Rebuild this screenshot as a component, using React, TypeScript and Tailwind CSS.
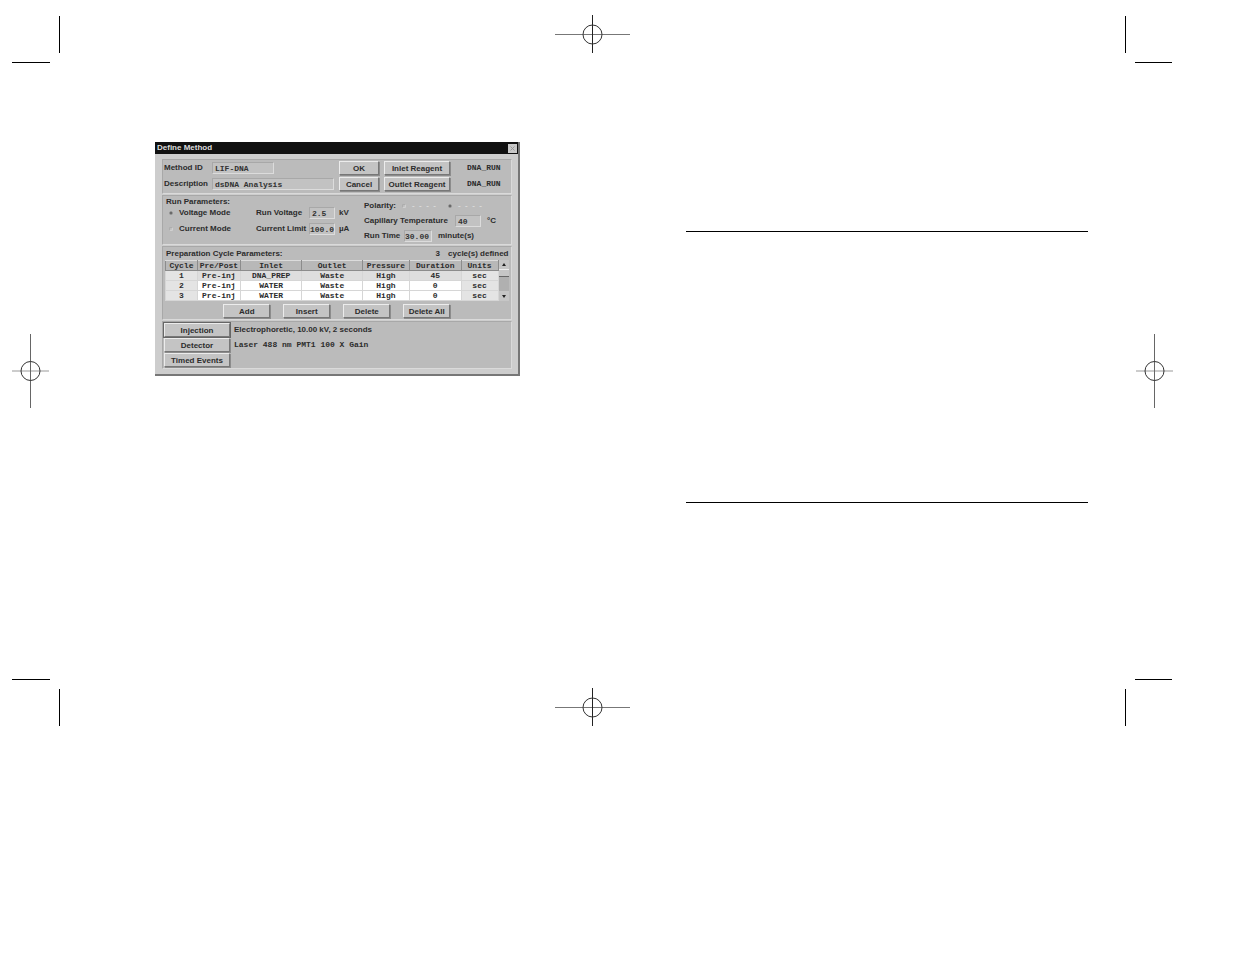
import type { ReactNode } from "react";

function CropMark({ corner }: { corner: "tl" | "tr" | "bl" | "br" }) {
  const lines = {
    tl: ["M47.5 1V38", "M0 47.5H38"],
    tr: ["M0.5 1V38", "M10 47.5H47"],
    bl: ["M47.5 10V47", "M0 0.5H38"],
    br: ["M0.5 10V47", "M10 0.5H47"],
  }[corner];
  return (
    <svg width="48" height="48" aria-hidden="true" className="block shrink-0" fill="none" stroke="#000">
      {lines.map((d) => (
        <path key={d} d={d} />
      ))}
    </svg>
  );
}

function WideTarget() {
  return (
    <svg width="76" height="38" aria-hidden="true" className="block shrink-0" fill="none">
      <path d="M0 19.5H75" stroke="#777" />
      <path d="M37.5 0V38" stroke="#222" />
      <circle cx="37.5" cy="19.5" r="9.5" stroke="#333" />
    </svg>
  );
}

function TallTarget() {
  return (
    <svg width="37" height="75" aria-hidden="true" className="block shrink-0 self-center" fill="none">
      <path d="M0 37H37" stroke="#ccc" strokeWidth="2" />
      <path d="M18.5 0V74" stroke="#666" />
      <circle cx="18.5" cy="37" r="9.5" stroke="#333" />
    </svg>
  );
}

function Field({ id, value, className }: { id: string; value: string; className: string }) {
  return (
    <input
      id={id}
      defaultValue={value}
      className={`h-3 min-w-0 border border-t-[#a8a8a8] border-l-[#a8a8a8] border-r-[#dcdcdc] border-b-[#dcdcdc] bg-[#c2c2c2] font-['Liberation_Mono',monospace] text-[8px] leading-none font-bold text-[#333] ${className}`}
    />
  );
}

function Button({ children, className = "" }: { children: ReactNode; className?: string }) {
  return (
    <button
      type="button"
      className={`h-[14px] border border-t-[#ececec] border-l-[#ececec] border-r-[#777] border-b-[#777] bg-[#c4c4c4] text-center leading-[11px] whitespace-nowrap shadow-[1px_1px_0_#8c8c8c] ${className}`}
    >
      {children}
    </button>
  );
}

const panel = "border border-t-[#a8a8a8] border-l-[#a8a8a8] border-r-[#dadada] border-b-[#dadada] bg-[#bbbbbb]";
const mono = "font-['Liberation_Mono',monospace]";
const radio = "m-0 size-1 shrink-0 appearance-none rounded-full border border-t-[#aaa] border-l-[#aaa] border-r-[#d4d4d4] border-b-[#d4d4d4] bg-[#c4c4c4] checked:border-[#999] checked:bg-[#555]";

const columns = ["Cycle", "Pre/Post", "Inlet", "Outlet", "Pressure", "Duration", "Units"];
const cycles = [
  ["1", "Pre-inj", "DNA_PREP", "Waste", "High", "45", "sec"],
  ["2", "Pre-inj", "WATER", "Waste", "High", "0", "sec"],
  ["3", "Pre-inj", "WATER", "Waste", "High", "0", "sec"],
];

function MethodHeader() {
  return (
    <section className={`flex h-[35px] gap-[5px] pt-px pl-px ${panel}`}>
      <div className="grid grid-cols-[48px_122px] content-start items-center gap-y-1 pt-px">
        <label htmlFor="method-id">Method ID</label>
        <Field id="method-id" value="LIF-DNA" className="w-[62px] px-0.5" />
        <label htmlFor="description">Description</label>
        <Field id="description" value="dsDNA Analysis" className="w-full px-0.5" />
      </div>
      <div className="grid grid-cols-[40px_66px_auto] content-start items-center gap-x-[5px] gap-y-0.5">
        <Button>OK</Button>
        <Button>Inlet Reagent</Button>
        <span className={`pl-3 ${mono}`}>DNA_RUN</span>
        <Button>Cancel</Button>
        <Button>Outlet Reagent</Button>
        <span className={`pl-3 ${mono}`}>DNA_RUN</span>
      </div>
    </section>
  );
}

function RunParameters() {
  return (
    <section aria-label="Run Parameters" className={`flex h-[50px] pt-px pl-[3px] ${panel}`}>
      <div className="w-[198px]">
        <h2 className="leading-[10px]">Run Parameters:</h2>
        <div className="grid grid-cols-[90px_53px_26px_auto] items-center gap-y-1">
          <label className="flex items-center gap-1.5 pl-[3px]">
            <input type="radio" name="mode" defaultChecked className={radio} />
            Voltage Mode
          </label>
          <label htmlFor="run-voltage">Run Voltage</label>
          <Field id="run-voltage" value="2.5" className="w-full px-0.5" />
          <span className="pl-1">kV</span>
          <label className="flex items-center gap-1.5 pl-[3px]">
            <input type="radio" name="mode" className={radio} />
            Current Mode
          </label>
          <label htmlFor="current-limit">Current Limit</label>
          <Field id="current-limit" value="100.0" className="w-full px-0" />
          <span className="pl-1">µA</span>
        </div>
      </div>
      <div className="flex flex-col gap-[3px] pt-[3px]">
        <div className="flex h-3 items-center">
          <span className="w-[38px]">Polarity:</span>
          <label className="flex w-[46px] items-center gap-1.5 text-[#dcdcdc]">
            <input type="radio" name="polarity" className={radio} />
            -&nbsp; -&nbsp; -&nbsp; -
          </label>
          <label className="flex items-center gap-1.5 text-[#dcdcdc]">
            <input type="radio" name="polarity" defaultChecked className={radio} />
            -&nbsp; -&nbsp; -&nbsp; -
          </label>
        </div>
        <div className="flex items-center">
          <label htmlFor="temperature" className="w-[91px] whitespace-nowrap">Capillary Temperature</label>
          <Field id="temperature" value="40" className="w-[26px] px-0.5" />
          <span className="pl-1.5">°C</span>
        </div>
        <div className="flex items-center">
          <label htmlFor="run-time" className="w-10 whitespace-nowrap">Run Time</label>
          <Field id="run-time" value="30.00" className="w-7 px-0" />
          <span className="pl-1.5">minute(s)</span>
        </div>
      </div>
    </section>
  );
}

function CycleParameters() {
  return (
    <section aria-label="Preparation Cycle Parameters" className={`h-[74px] px-0.5 pt-px ${panel}`}>
      <div className="flex h-3 items-center justify-between pl-px">
        <h2>Preparation Cycle Parameters:</h2>
        <span className="flex gap-2">
          <span>3</span>
          <span>cycle(s) defined</span>
        </span>
      </div>
      <div className="flex">
        <table className={`grow table-fixed border-collapse text-center leading-[9px] ${mono}`}>
          <colgroup>
            <col className="w-[32px]" />
            <col className="w-[43px]" />
            <col className="w-[62px]" />
            <col className="w-[61px]" />
            <col className="w-[47px]" />
            <col className="w-[52px]" />
            <col className="w-[37px]" />
          </colgroup>
          <thead>
            <tr className="h-2.5 bg-[#b8b8b8]">
              {columns.map((c) => (
                <th key={c} scope="col" className="border border-[#8c8c8c] border-t-[#dcdcdc] p-0">{c}</th>
              ))}
            </tr>
          </thead>
          <tbody>
            {cycles.map((row, r) => (
              <tr key={row[0]} className={r === 0 ? "h-2.5 bg-[#dedede]" : "h-2.5 bg-white"}>
                {row.map((cell, i) => (
                  <td key={i} className={`border border-[#d6d6d6] p-0 ${i === 0 || i === 6 ? "bg-[#e4e4e4]" : ""}`}>{cell}</td>
                ))}
              </tr>
            ))}
          </tbody>
        </table>
        <div className="flex w-2.5 flex-col items-center justify-between bg-[#b0b0b0]">
          <svg width="10" height="17" aria-hidden="true" className="block">
            <path d="M0 0H10V16H0Z" fill="#c6c6c6" />
            <path d="M3 6L5 3L7 6Z" fill="#222" />
            <path d="M0 16.5H10" stroke="#666" />
            <path d="M0 9.5H10" stroke="#eee" />
          </svg>
          <svg width="10" height="10" aria-hidden="true" className="block">
            <path d="M0 0H10V10H0Z" fill="#c6c6c6" />
            <path d="M3 4L5 7L7 4Z" fill="#222" />
          </svg>
        </div>
      </div>
      <div className="flex justify-center gap-[13px] pt-[3px]">
        <Button className="w-[47px]">Add</Button>
        <Button className="w-[47px]">Insert</Button>
        <Button className="w-[47px]">Delete</Button>
        <Button className="w-[47px]">Delete All</Button>
      </div>
    </section>
  );
}

function Details() {
  return (
    <section className={`grid h-[48px] grid-cols-[66px_1fr] content-start items-center gap-x-1 gap-y-px pt-px pl-px ${panel}`}>
      <Button className="outline outline-[#666]">Injection</Button>
      <span>Electrophoretic, 10.00 kV, 2 seconds</span>
      <Button>Detector</Button>
      <span className={mono}>Laser 488 nm PMT1 100 X Gain</span>
      <Button>Timed Events</Button>
    </section>
  );
}

function MethodDialog() {
  return (
    <div
      role="dialog"
      aria-label="Define Method"
      className="border-r-2 border-b-2 border-[#777] bg-[#cdcdcd] font-['Liberation_Sans',sans-serif] text-[8px] leading-[10px] font-bold text-[#2c2c2c]"
    >
      <div className="flex h-3 items-center justify-between bg-[#111] pr-px pl-0.5 text-[#ddd]">
        <h1>Define Method</h1>
        <button type="button" aria-label="Close" className="flex size-[9px] items-center justify-center bg-[#c8c8c8]">
          <svg width="7" height="7" aria-hidden="true" fill="none" stroke="#999">
            <path d="M1.5 1.5L5.5 5.5M5.5 1.5L1.5 5.5" />
          </svg>
        </button>
      </div>
      <div className="flex flex-col gap-px pt-[5px] pr-1.5 pb-[5px] pl-[7px]">
        <MethodHeader />
        <RunParameters />
        <CycleParameters />
        <Details />
      </div>
    </div>
  );
}

export default function App() {
  return (
    <main className="flex min-h-screen flex-col bg-white pt-[15px] pr-[62px] pl-3">
      <div className="flex items-start justify-between">
        <CropMark corner="tl" />
        <WideTarget />
        <CropMark corner="tr" />
      </div>
      <div className="flex min-h-[616px]">
        <TallTarget />
        <div className="grid grow grid-cols-2">
          <div className="pt-[79px] pr-[73px] pl-[106px]">
            <MethodDialog />
          </div>
          <div className="flex flex-col gap-[270px] pt-[168px] pr-[48px] pl-[93px]">
            <hr className="border-black" />
            <hr className="border-black" />
          </div>
        </div>
        <TallTarget />
      </div>
      <div className="flex items-center justify-between">
        <CropMark corner="bl" />
        <div className="pt-2">
          <WideTarget />
        </div>
        <CropMark corner="br" />
      </div>
    </main>
  );
}
